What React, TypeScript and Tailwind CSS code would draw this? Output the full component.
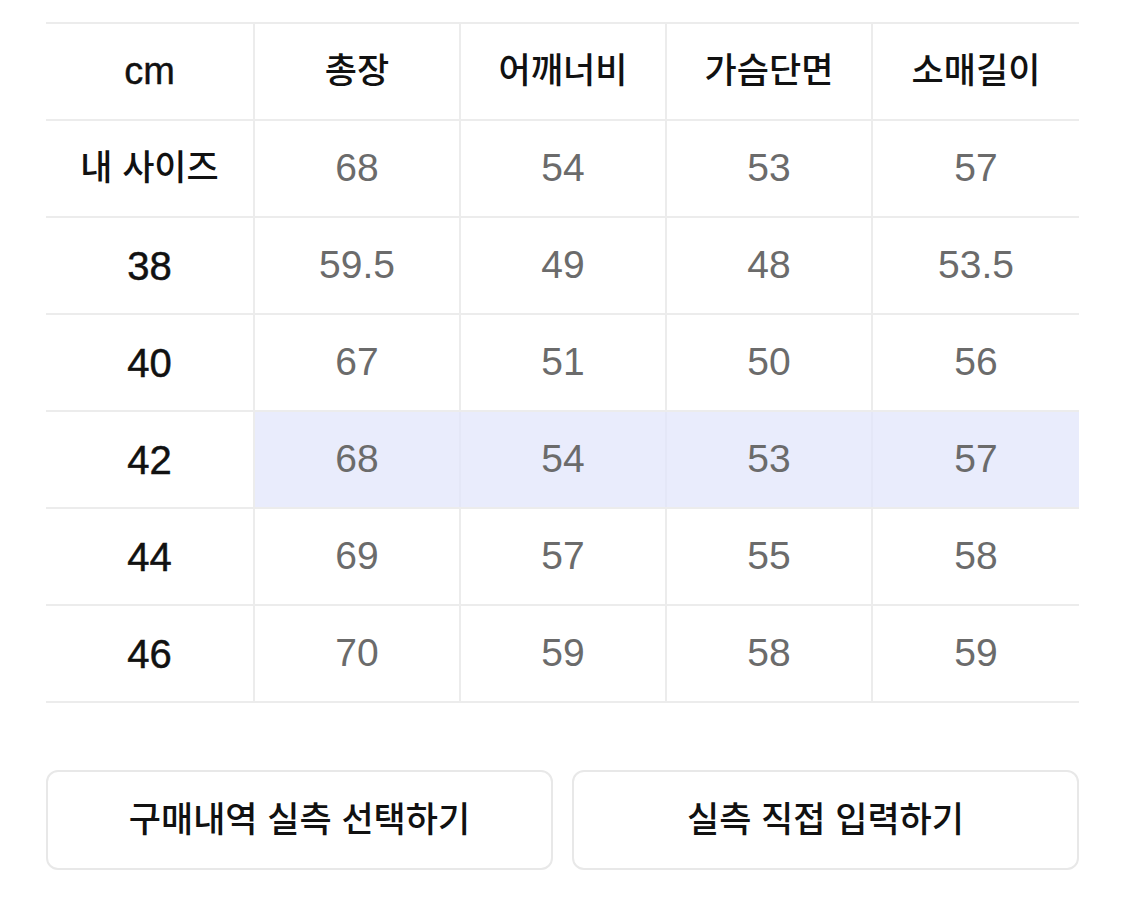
import React from "react";

const headers = ["cm", "총장", "어깨너비", "가슴단면", "소매길이"];
const rows: { label: string; values: string[]; hl?: boolean }[] = [
  { label: "내 사이즈", values: ["68", "54", "53", "57"] },
  { label: "38", values: ["59.5", "49", "48", "53.5"] },
  { label: "40", values: ["67", "51", "50", "56"] },
  { label: "42", values: ["68", "54", "53", "57"], hl: true },
  { label: "44", values: ["69", "57", "55", "58"] },
  { label: "46", values: ["70", "59", "58", "59"] },
];

const font = { fontFamily: '"Liberation Sans", "Noto Sans CJK KR", sans-serif' };

export default function App() {
  return (
    <div className="w-[1125px] h-[906px] bg-white px-[46px] pt-[22px]" style={font}>
      <div className="border-t-2 border-[#ececec]">
        <div className="grid grid-cols-[209px_repeat(4,1fr)] h-[97px] border-b-2 border-[#ececec]">
          {headers.map((h, i) => (
            <div
              key={h}
              className={`flex items-center justify-center text-[#111] ${i === 0 ? "text-[38px] [-webkit-text-stroke:0.4px_#111]" : "text-[35px] font-medium"} ${i < 4 ? "border-r-2 border-[#ececec]" : ""}`}
            >
              {h}
            </div>
          ))}
        </div>
        {rows.map((r) => (
          <div key={r.label} className="grid grid-cols-[209px_repeat(4,1fr)] h-[97px] border-b-2 border-[#ececec]">
            <div className="flex items-center justify-center border-r-2 border-[#ececec] text-[#111]">
              {r.label.match(/^\d/) ? (
                <span className="text-[40px] [-webkit-text-stroke:0.5px_#111]">{r.label}</span>
              ) : (
                <span className="text-[35px] font-medium">{r.label}</span>
              )}
            </div>
            {r.values.map((v, i) => (
              <div
                key={i}
                className={`flex items-center justify-center text-[39px] text-[#6b6b6b] ${r.hl ? "bg-[#e9ecfc]" : ""} ${i < 3 ? (r.hl ? "border-r-2 border-[#e4e7f7]" : "border-r-2 border-[#ececec]") : ""}`}
              >
                {v}
              </div>
            ))}
          </div>
        ))}
      </div>
      <div className="mt-[67px] flex gap-[19px]">
        <button className="flex-1 h-[100px] rounded-[12px] border-2 border-[#e8e8e8] bg-white text-[35px] font-medium text-[#111] flex items-center justify-center">
          구매내역 실측 선택하기
        </button>
        <button className="flex-1 h-[100px] rounded-[12px] border-2 border-[#e8e8e8] bg-white text-[35px] font-medium text-[#111] flex items-center justify-center">
          실측 직접 입력하기
        </button>
      </div>
    </div>
  );
}
